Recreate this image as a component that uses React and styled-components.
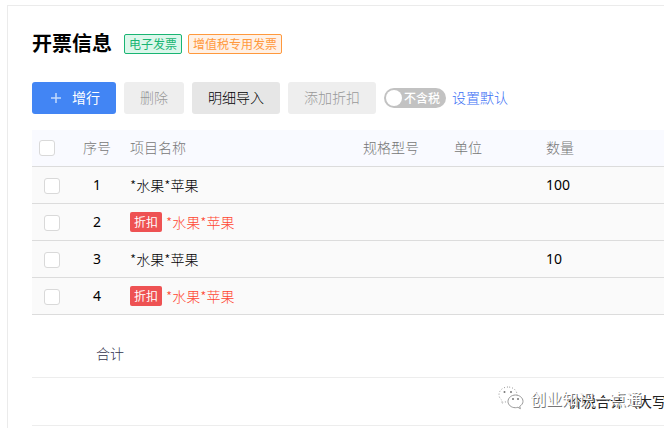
import React from "react";
import styled, { createGlobalStyle } from "styled-components";

const GlobalStyle = createGlobalStyle`
  * { box-sizing: border-box; }
  body {
    margin: 0;
    overflow: hidden;
    background: #fff;
    color: #000;
    font-family: "Noto Sans CJK SC", "Noto Sans", sans-serif;
    font-size: 14px;
    font-weight: 300;
    line-height: 20px;
  }
`;

const Panel = styled.main`
  position: relative;
  margin: 5px 0 0 7px;
  padding: 24px 0 0 24px;
  min-height: calc(100vh - 5px);
  border: 1px solid #ebebeb;
  border-width: 1px 0 0 1px;
  overflow: hidden;
`;

const Header = styled.header`
  display: flex;
  align-items: center;
  gap: 6px;
  height: 28px;
`;

const Title = styled.h1`
  margin: 0 6px 0 0;
  padding-bottom: 2px;
  font-size: 20px;
  font-weight: 700;
  line-height: 26px;
  color: #000;
`;

const Tag = styled.span`
  height: 20px;
  padding: 0 4px;
  border: 1px solid ${(p) => p.$color};
  border-radius: 2px;
  background: ${(p) => p.$bg};
  color: ${(p) => p.$color};
  font-size: 12px;
  font-weight: 400;
  line-height: 17px;
`;

const Toolbar = styled.div`
  display: flex;
  align-items: center;
  gap: 8px;
  margin: 24px 0 16px;
  white-space: nowrap;
`;

const variants = {
  primary: "background: #4285f4; color: #fff; font-weight: 400;",
  normal: "background: #e6e6e6; color: #000;",
};

const Button = styled.button`
  display: flex;
  align-items: center;
  height: 32px;
  padding: 0 16px 2px;
  border: 0;
  border-radius: 3px;
  font: inherit;
  ${(p) => variants[p.$variant]}
  &:disabled {
    background: #eee;
    color: #999;
  }
`;

const PlusIcon = styled.svg`
  width: 16px;
  height: 16px;
  margin-right: 8px;
`;

const Switch = styled.label`
  display: flex;
  align-items: center;
  height: 20px;
  padding: 0 6px 0 2px;
  border-radius: 10px;
  background: #c2c2c2;
  color: #fff;
  font-size: 12px;
  font-weight: 500;
`;

const Knob = styled.input`
  appearance: none;
  width: 16px;
  height: 16px;
  margin: 0 2px 0 0;
  border-radius: 50%;
  background: #fff;
`;

const Link = styled.a`
  margin-left: -2px;
  padding-bottom: 2px;
  color: #3b6ff5;
  text-decoration: none;
`;

const Table = styled.table`
  width: 100%;
  table-layout: fixed;
  border-collapse: separate;
  border-spacing: 0;
`;

const Col = styled.col`
  width: ${(p) => p.$width};
`;

const Cell = styled.td`
  height: 37px;
  padding: 0 8px 2px;
  border-bottom: 1px solid #dcdcdc;
  background: #fafafa;
  text-align: ${(p) => p.$align || "left"};
  white-space: nowrap;
  color: ${(p) => (p.$discount ? "#ff4530" : "#000")};
`;

const NumberCell = styled(Cell)`
  padding: 0 8px;
  font-family: "Noto Sans", sans-serif;
  font-weight: 400;
`;

const HeadCell = styled(Cell).attrs({ as: "th", scope: "col" })`
  background: #f9faff;
  color: #777;
  font-weight: 300;
`;

const CheckCell = styled(Cell)`
  padding: 2px 0 0 12px;
`;

const HeadCheckCell = styled(HeadCell)`
  padding: 0 0 0 7px;
`;

const Checkbox = styled.input.attrs({ type: "checkbox" })`
  appearance: none;
  display: block;
  width: 16px;
  height: 16px;
  margin: 0;
  border: 1px solid #d9d9d9;
  border-radius: 3px;
  background: #fff;
`;

const DiscountTag = styled.span`
  display: inline-block;
  height: 20px;
  margin-right: 4px;
  padding: 0 4px;
  border-radius: 2px;
  background: #ee5253;
  color: #fff;
  font-size: 12px;
  font-weight: 400;
  line-height: 20px;
  vertical-align: middle;
`;

const Name = styled.span`
  vertical-align: middle;
`;

const Total = styled.div`
  height: 63px;
  padding: 28px 0 0 64px;
  border-bottom: 1px solid #ededed;
  color: #33334d;
`;

const Amount = styled.div`
  height: 48px;
  padding: 13px 0 0 536px;
  border-bottom: 1px solid #ededed;
  color: #222;
  font-weight: 400;
  white-space: nowrap;
`;

const Watermark = styled.div`
  position: absolute;
  right: 22px;
  bottom: 18px;
  display: flex;
  align-items: center;
  gap: 6px;
  color: #fff;
  font-size: 16px;
  font-weight: 400;
  line-height: 24px;
  text-shadow: 1px 1px 0 #777;
`;

const ChatIcon = styled.svg`
  width: 26px;
  height: 24px;
  fill: #fff;
  stroke: #999;
  stroke-width: 1;
`;

const rows = [
  { id: 1, name: "*水果*苹果", quantity: "100" },
  { id: 2, name: "*水果*苹果", discount: true },
  { id: 3, name: "*水果*苹果", quantity: "10" },
  { id: 4, name: "*水果*苹果", discount: true },
];

export default function App() {
  return (
    <>
      <GlobalStyle />
      <Panel>
        <Header>
          <Title>开票信息</Title>
          <Tag $color="#19b573" $bg="#dcf7eb">电子发票</Tag>
          <Tag $color="#ff993d" $bg="#fff1e6">增值税专用发票</Tag>
        </Header>
        <Toolbar>
          <Button type="button" $variant="primary">
            <PlusIcon viewBox="0 0 16 16" aria-hidden="true">
              <path d="M8 4v10M3 9h10" stroke="#c4dafc" strokeWidth="1.500" />
            </PlusIcon>
            增行
          </Button>
          <Button type="button" disabled>删除</Button>
          <Button type="button" $variant="normal">明细导入</Button>
          <Button type="button" disabled>添加折扣</Button>
          <Switch>
            <Knob type="checkbox" role="switch" />
            不含税
          </Switch>
          <Link href="#default">设置默认</Link>
        </Toolbar>
        <Table>
          <colgroup>
            <Col $width="40px" />
            <Col $width="50px" />
            <Col $width="233px" />
            <Col $width="91px" />
            <Col $width="92px" />
            <Col $width="auto" />
          </colgroup>
          <thead>
            <tr>
              <HeadCheckCell><Checkbox aria-label="全选" /></HeadCheckCell>
              <HeadCell $align="center">序号</HeadCell>
              <HeadCell>项目名称</HeadCell>
              <HeadCell>规格型号</HeadCell>
              <HeadCell>单位</HeadCell>
              <HeadCell>数量</HeadCell>
            </tr>
          </thead>
          <tbody>
            {rows.map((row) => (
              <tr key={row.id}>
                <CheckCell><Checkbox aria-label={`选择 ${row.id}`} /></CheckCell>
                <NumberCell $align="center">{row.id}</NumberCell>
                <Cell $discount={row.discount}>
                  {row.discount && <DiscountTag>折扣</DiscountTag>}
                  <Name>{row.name}</Name>
                </Cell>
                <Cell />
                <Cell />
                <NumberCell>{row.quantity}</NumberCell>
              </tr>
            ))}
          </tbody>
        </Table>
        <Total>合计</Total>
        <Amount>价税合计（大写）</Amount>
        <Watermark>
          <ChatIcon viewBox="0 0 26 24" aria-hidden="true">
            <path d="M10 1C5 1 1 4.400 1 8.700c0 2.500 1.300 4.500 3.400 5.900L3.500 17.500l3.300-1.700c1 .3 2.100.4 3.200.4 5 0 9-3.200 9-7.500S15 1 10 1Z" strokeDasharray="1 2" />
            <path d="M17.500 9C13.500 9 10 11.800 10 15.400s3.300 6.300 7.300 6.300c.9 0 1.800-.2 2.600-.4l2.500 1.400-.7-2.300c1.900-1.200 3.300-3 3.300-5C25 11.800 21.500 9 17.500 9Z" />
            <g fill="#777" stroke="none">
              <circle cx="6.500" cy="6" r="1" /><circle cx="13" cy="6" r="1" />
              <circle cx="15" cy="13" r="1" /><circle cx="20" cy="13" r="1" />
            </g>
          </ChatIcon>
          创业知识一点通
        </Watermark>
      </Panel>
    </>
  );
}
